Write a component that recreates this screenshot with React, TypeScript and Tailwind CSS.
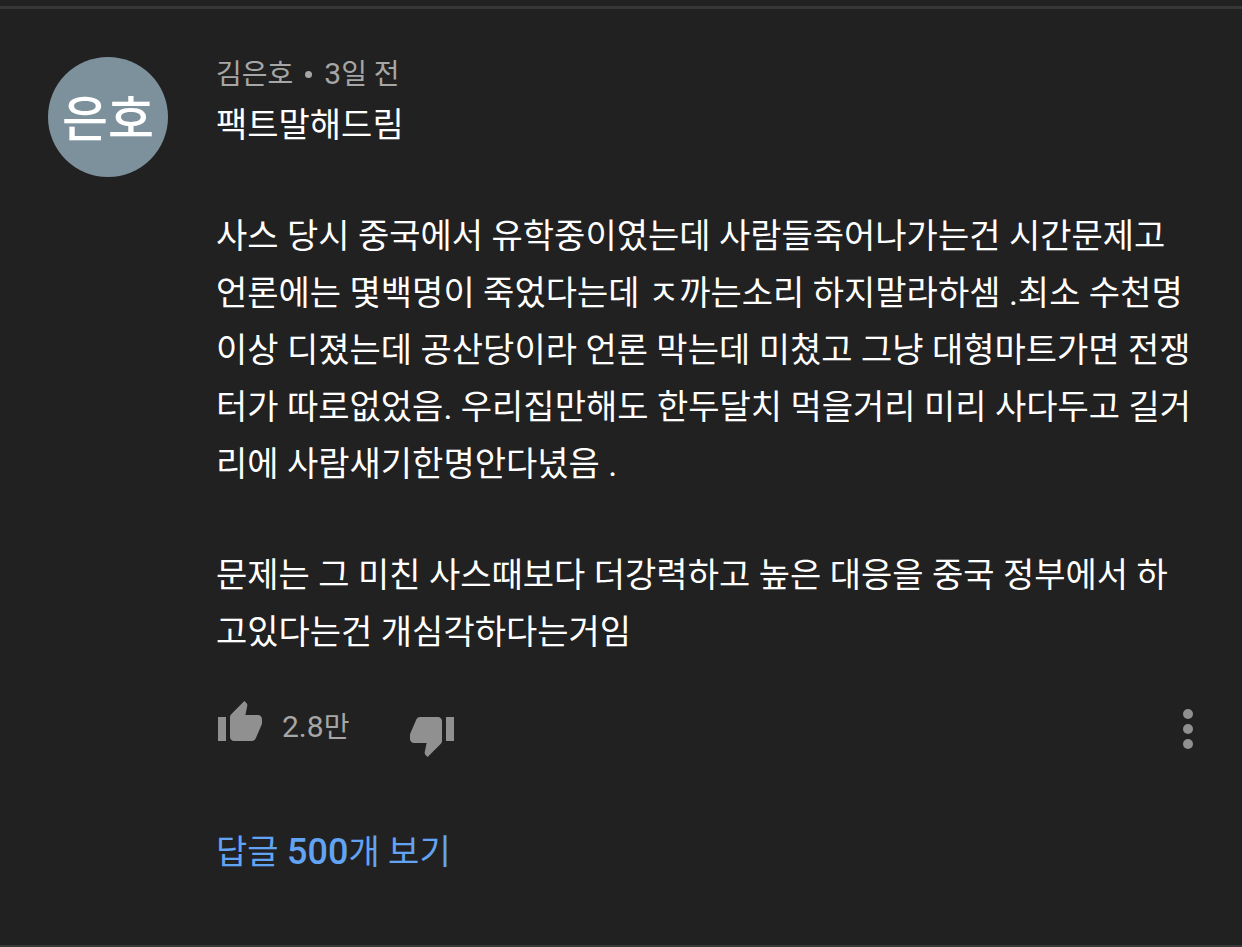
import React from "react";

const paragraphs = [
  "팩트말해드림",
  "사스 당시 중국에서 유학중이였는데 사람들죽어나가는건 시간문제고 언론에는 몇백명이 죽었다는데 ㅈ까는소리 하지말라하셈 .최소 수천명 이상 디졌는데 공산당이라 언론 막는데 미쳤고 그냥 대형마트가면 전쟁터가 따로없었음. 우리집만해도 한두달치 먹을거리 미리 사다두고 길거리에 사람새기한명안다녔음 .",
  "문제는 그 미친 사스때보다 더강력하고 높은 대응을 중국 정부에서 하고있다는건 개심각하다는거임",
];

function Avatar() {
  return (
    <div className="flex size-[120px] shrink-0 items-center justify-center rounded-full bg-[#7d919d] pt-1.5 text-[50px] leading-none font-medium text-white">
      은호
    </div>
  );
}

function ThumbUpIcon() {
  return (
    <svg viewBox="0 0 24 24" className="size-12" fill="currentColor" aria-hidden="true">
      <path d="M1 21h4V9H1v12zm22-11c0-1.1-.9-2-2-2h-6.31l.95-4.57.03-.32c0-.41-.17-.79-.44-1.06L14.17 1 7.59 7.59C7.22 7.95 7 8.45 7 9v10c0 1.1.9 2 2 2h9c.83 0 1.54-.5 1.84-1.22l3.02-7.05c.09-.23.14-.47.14-.73v-2z" />
    </svg>
  );
}

function ThumbDownIcon() {
  return (
    <svg viewBox="0 0 24 24" className="size-12" fill="currentColor" aria-hidden="true">
      <path d="M15 3H6c-.83 0-1.54.5-1.84 1.22l-3.02 7.05c-.09.23-.14.47-.14.73v2c0 1.1.9 2 2 2h6.31l-.95 4.57-.03.32c0 .41.17.79.44 1.06L9.83 23l6.59-6.59c.36-.36.58-.86.58-1.41V5c0-1.1-.9-2-2-2zm4 0v12h4V3h-4z" />
    </svg>
  );
}

function MoreIcon() {
  return (
    <svg viewBox="0 0 24 24" className="size-15" fill="currentColor" aria-hidden="true">
      <circle cx="12" cy="6" r="2" />
      <circle cx="12" cy="12" r="2" />
      <circle cx="12" cy="18" r="2" />
    </svg>
  );
}

export default function App() {
  return (
    <main className="min-h-screen border-b-2 border-[#373737] bg-[#212121] pt-1.5 font-[Roboto,'Noto_Sans_CJK_KR',sans-serif] text-white">
      <article className="flex gap-12 border-t-3 border-[#373737] px-12 pt-12 pb-16">
        <Avatar />
        <div className="min-w-0 flex-1">
          <header className="mb-[5px] flex items-center text-[28px] leading-[34px] text-[#a6a6a6]">
            <span>김은호</span>
            <span className="mx-3 size-[7px] rounded-full bg-[#a6a6a6]" aria-hidden="true" />
            <time>
              <span className="text-[30px]">3</span>일 전
            </time>
          </header>
          <div className="flex flex-col gap-[54px] text-[34px] leading-[57px]">
            {paragraphs.map((text) => (
              <p key={text}>{text}</p>
            ))}
          </div>
          <div className="mt-[38px] flex h-15 items-start text-[#909090]">
            <button type="button" aria-label="좋아요">
              <ThumbUpIcon />
            </button>
            <span className="mt-3 ml-[18px] text-[28px] leading-8 text-[#a6a6a6]">
              <span className="text-[30px]">2.8</span>만
            </span>
            <button type="button" aria-label="싫어요" className="ml-[59px] self-end">
              <ThumbDownIcon />
            </button>
            <button type="button" aria-label="더보기" className="-mr-6 ml-auto">
              <MoreIcon />
            </button>
          </div>
          <a href="#replies" className="mt-[65px] block text-[34px] leading-[57px] text-[#62a4f3]">
            답글 <span className="text-[36px] font-medium">500</span>개 보기
          </a>
        </div>
      </article>
    </main>
  );
}
